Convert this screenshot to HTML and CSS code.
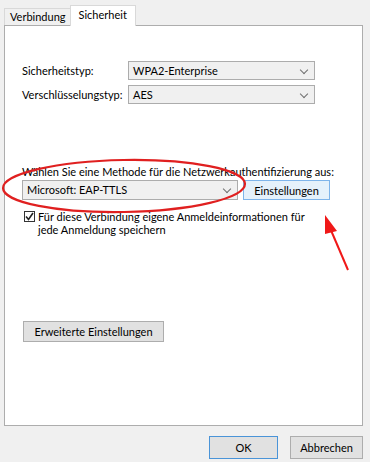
FILE: index.html
```html
<!DOCTYPE html>
<html lang="de">
<head>
    <meta charset="UTF-8">
    <title>Eigenschaften des Drahtlosnetzwerks</title>
    <link rel="stylesheet" href="styles.css">
</head>
<body>
    <div class="dialog">
        <div class="tabs">
            <div class="tab">Verbindung</div>
            <div class="tab active">Sicherheit</div>
        </div>
        <div class="panel">
            <div class="row first">
                <span class="label">Sicherheitstyp:</span>
                <div class="select wide">WPA2-Enterprise<span class="chev"></span></div>
            </div>
            <div class="row">
                <span class="label">Verschlüsselungstyp:</span>
                <div class="select wide">AES<span class="chev"></span></div>
            </div>

            <p class="method-label">Wählen Sie eine Methode für die Netzwerkauthentifizierung aus:</p>
            <div class="method-row">
                <div class="select method">Microsoft: EAP-TTLS<span class="chev"></span></div>
                <button class="btn settings">Einstellungen</button>
            </div>
            <div class="check-row">
                <span class="checkbox">
                    <svg width="9" height="9" viewBox="0 0 9 9"><path d="M1 4.5 L3.5 7.5 L8 1" fill="none" stroke="#222" stroke-width="1.6"/></svg>
                </span>
                <span class="check-text">Für diese Verbindung eigene Anmeldeinformationen für<br>jede Anmeldung speichern</span>
            </div>

            <button class="btn advanced">Erweiterte Einstellungen</button>
        </div>
        <div class="footer">
            <button class="btn ok">OK</button>
            <button class="btn cancel">Abbrechen</button>
        </div>

        <!-- red annotation drawn over the screenshot -->
        <svg class="marks" width="370" height="462" viewBox="0 0 370 462">
            <ellipse cx="124" cy="186" rx="121" ry="26" fill="none" stroke="#e02020" stroke-width="2.2" transform="rotate(-1 124 186)"/>
            <line x1="348" y1="270" x2="330" y2="228" stroke="#f01818" stroke-width="2"/>
            <path d="M325 215 L337 231 L325 234 Z" fill="#f01818"/>
        </svg>
    </div>
</body>
</html>
```

FILE: styles.css
```css
body {
    margin: 0;
    background: #f0f0f0;
    font-family: Lato, "Noto Sans", sans-serif;
    font-size: 11px;
    color: #000;
}

.dialog {
    position: relative;
    width: 370px;
    height: 462px;
    padding: 5px 7px 0 4px;
    box-sizing: border-box;
}

.tabs {
    display: flex;
    align-items: flex-end;
    height: 20px;
}

.tab {
    height: 16px;
    line-height: 15px;
    padding: 0 4px 0 5px;
    border: 1px solid #d9d9d9;
    border-bottom: none;
    background: #f0f0f0;
}

.tab.active {
    height: 20px;
    line-height: 18px;
    padding: 0 8px 0 8px;
    background: #fff;
    margin-left: -1px;
    position: relative;
    top: 1px;
}

.panel {
    height: 401px;
    border: 1px solid #adadad;
    background: #fff;
    box-sizing: border-box;
    padding: 0 0 0 17px;
}

.row {
    display: flex;
    align-items: center;
    margin-top: 5px;
}

.row.first {
    margin-top: 35px;
}

.label {
    width: 106px;
}

.select {
    position: relative;
    height: 19px;
    line-height: 17px;
    border: 1px solid #acacac;
    background: #f0f0f0;
    padding-left: 4px;
    box-sizing: border-box;
}

.select.wide {
    width: 187px;
}

.chev {
    position: absolute;
    right: 7px;
    top: 5px;
    width: 5px;
    height: 5px;
    border-right: 1.2px solid #707070;
    border-bottom: 1.2px solid #707070;
    transform: rotate(45deg);
}

.method-label {
    margin: 60px 0 0 0;
    line-height: 15px;
    white-space: nowrap;
}

.method-row {
    display: flex;
    gap: 5px;
    margin-top: 1px;
}

.select.method {
    width: 216px;
    height: 20px;
    line-height: 18px;
}

.btn {
    font-family: inherit;
    font-size: 11px;
    border: 1px solid #adadad;
    background: #e1e1e1;
    color: #000;
    padding: 0;
    height: 21px;
    box-sizing: border-box;
}

.btn.settings {
    width: 87px;
    height: 20px;
    background: #e5f1fb;
    border-color: #7eb4ea;
}

.check-row {
    display: flex;
    align-items: flex-start;
    margin-top: 10px;
    margin-left: 2px;
}

.checkbox {
    width: 11px;
    height: 11px;
    border: 1px solid #333;
    box-sizing: border-box;
    display: flex;
    align-items: center;
    justify-content: center;
    margin-top: 1px;
    margin-right: 3px;
}

.check-text {
    line-height: 13px;
}

.btn.advanced {
    display: block;
    width: 141px;
    margin-top: 85px;
    margin-left: 1px;
}

.footer {
    display: flex;
    justify-content: flex-end;
    gap: 12px;
    padding-top: 10px;
}

.btn.ok {
    width: 69px;
    height: 23px;
    border-color: #4a94d8;
    background: #e1e1e1;
}

.btn.cancel {
    width: 73px;
    height: 23px;
}

.marks {
    position: absolute;
    left: 0;
    top: 0;
    pointer-events: none;
}
```
